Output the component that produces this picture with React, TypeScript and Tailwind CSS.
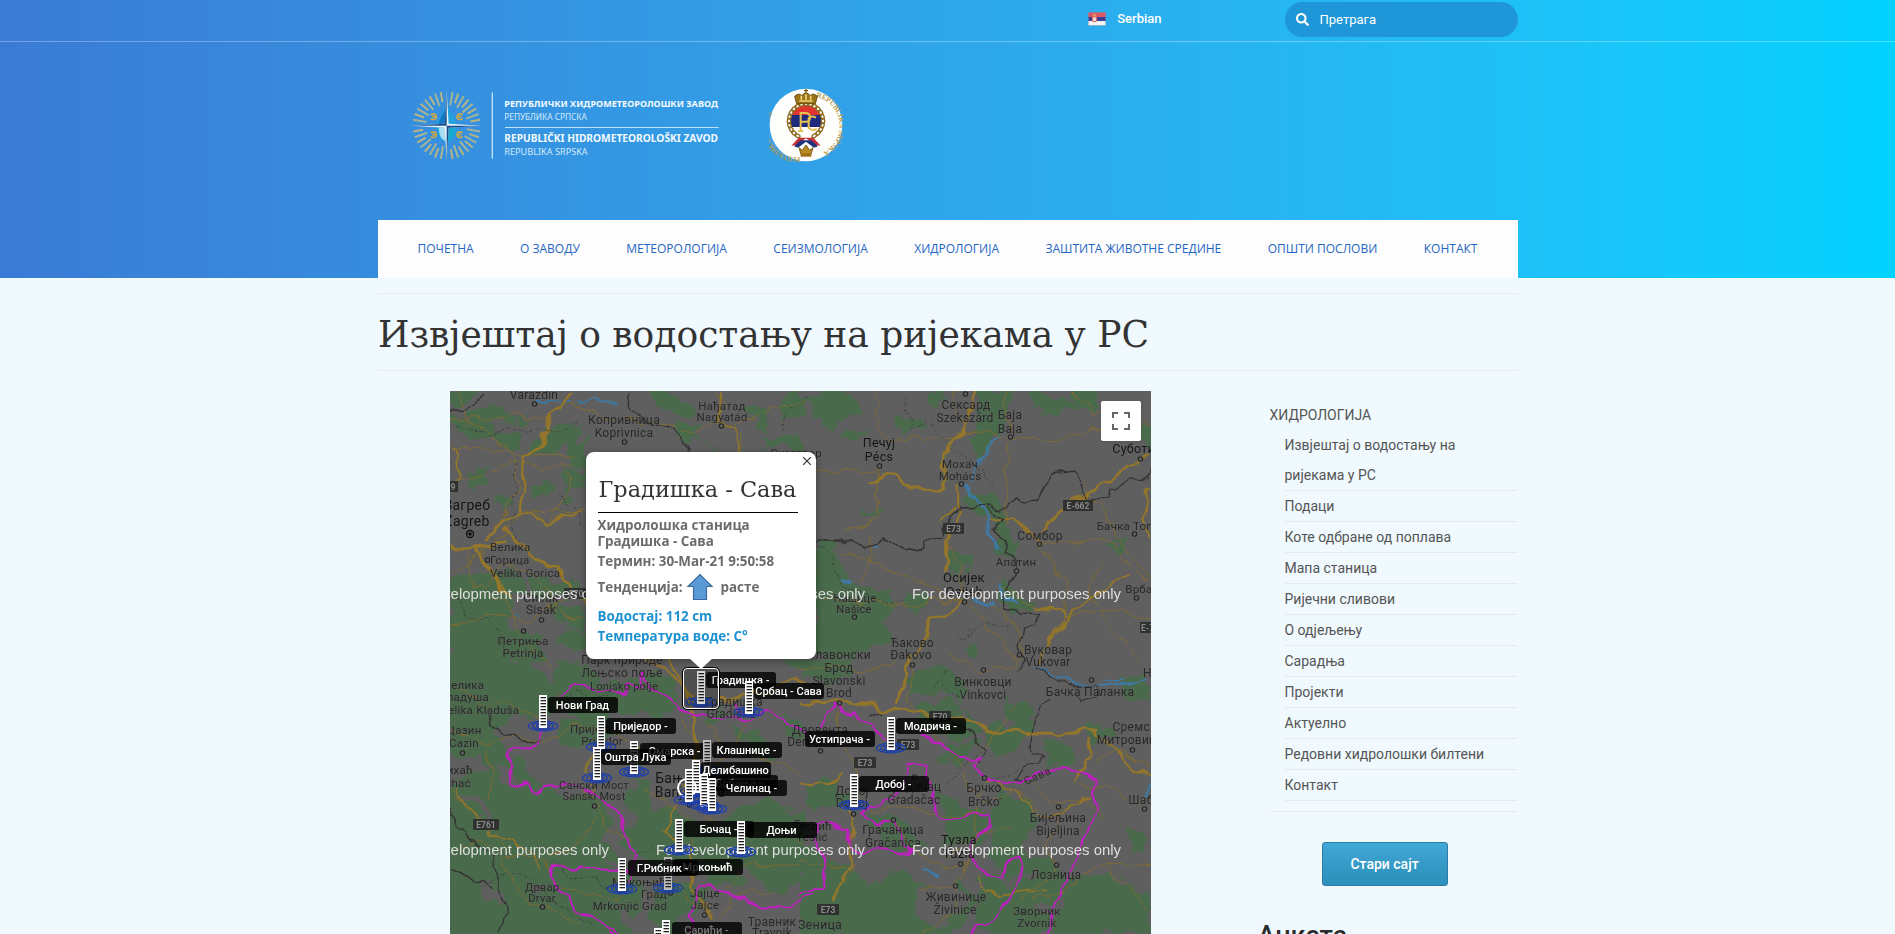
import React from "react";
import { FaSearch } from "react-icons/fa";

const MAP_X = 450;
const MAP_Y = 391;

const navItems = [
  "ПОЧЕТНА",
  "О ЗАВОДУ",
  "МЕТЕОРОЛОГИЈА",
  "СЕИЗМОЛОГИЈА",
  "ХИДРОЛОГИЈА",
  "ЗАШТИТА ЖИВОТНЕ СРЕДИНЕ",
  "ОПШТИ ПОСЛОВИ",
  "КОНТАКТ",
];

const sideItems = [
  "Извјештај о водостању на ријекама у РС",
  "Подаци",
  "Коте одбране од поплава",
  "Мапа станица",
  "Ријечни сливови",
  "О одјељењу",
  "Сарадња",
  "Пројекти",
  "Актуелно",
  "Редовни хидролошки билтени",
  "Контакт",
];

function Flag() {
  return (
    <svg width="20" height="16" viewBox="0 0 20 16" className="block">
      <rect x="1" y="1" width="18" height="14" rx="1.5" fill="#8a8fa0" opacity=".6" />
      <rect x="1.5" y="1.5" width="17" height="4.6" fill="#d95a64" />
      <rect x="1.5" y="6" width="17" height="4.2" fill="#3c3f96" />
      <rect x="1.5" y="10" width="17" height="4.3" fill="#f4f2f2" />
      <path d="M5 4.5h5v5.5q-2.500 2.500-5 0z" fill="#dd6a5e" />
      <path d="M5.700 4.500q1.800-3 3.600 0z" fill="#e8c27a" />
      <path d="M6 7q1.500-2 3 0v3h-3z" fill="#f0d9d0" />
    </svg>
  );
}

function InstituteLogo() {
  const rays = [];
  for (let q = 0; q < 4; q++) {
    for (let i = 0; i < 8; i++) {
      rays.push(q * 90 + 10 + i * 10);
    }
  }
  return (
    <svg width="310" height="74" viewBox="410 88 310 74" className="block">
      <g transform="translate(370 60) scale(.33333)">
        {rays.map((a, i) => (
          <line
            key={a}
            x1="0"
            y1={i % 2 ? -72 : -62}
            x2="0"
            y2="-102"
            stroke={i % 2 ? "#b9b482" : "#a3b596"}
            strokeWidth="6"
            transform={`translate(227 197) rotate(${a})`}
          />
        ))}
        <path d="M227 130C212 165 198 178 198 208a29 38 0 0 0 58 0C256 178 242 165 227 130z" fill="#1fa3dd" />
        <path d="M227 136C214 168 203 180 203 197H227z" fill="#1278c4" />
        <path d="M203 203h20v40q-18-6-20-40z" fill="#a9dcf3" />
        <path d="M231 203h20q0 32-20 40z" fill="#18a7cf" />
        {[
          [187, 170],
          [267, 170],
          [187, 224],
          [267, 224],
        ].map(([x, y], i) => (
          <g key={i} transform={`translate(${x} ${y}) scale(${i % 2 ? -1 : 1} 1)`} fill="none" stroke="#c9a84a" strokeWidth="5">
            <path d="M-8-6q10-5 15 0q4 6 0 12q-5 5-15 0M-4 0h10" />
          </g>
        ))}
        <path d="M227 92l6 99 100 6-100 6-6 99-6-99-100-6 100-6z" fill="#e9f5fb" />
        <path d="M227 92v105l-6-6zM333 197H227l6 6zM227 302V197l6 6zM121 197h106l-6-6z" fill="#1a4f8c" />
        <rect x="362" y="97" width="4" height="199" fill="#bfe0f6" />
        <rect x="402" y="201" width="641" height="3" fill="#bfe0f6" />
        <g fill="#f2faff" fontFamily="'Noto Sans','Open Sans',sans-serif">
          <text x="400" y="141" fontSize="27" fontWeight="700" textLength="641" lengthAdjust="spacingAndGlyphs">РЕПУБЛИЧКИ ХИДРОМЕТЕОРОЛОШКИ ЗАВОД</text>
          <text x="400" y="179" fontSize="27" fill="#d2eafa" textLength="247" lengthAdjust="spacingAndGlyphs">РЕПУБЛИКА СРПСКА</text>
          <text x="400" y="247" fontSize="29" fontWeight="700" textLength="641" lengthAdjust="spacingAndGlyphs">REPUBLIČKI HIDROMETEOROLOŠKI ZAVOD</text>
          <text x="400" y="285" fontSize="28" fill="#d2eafa" textLength="250" lengthAdjust="spacingAndGlyphs">REPUBLIKA SRPSKA</text>
        </g>
      </g>
    </svg>
  );
}

function Emblem() {
  const leaves = [];
  for (let a = -150; a <= 150; a += 15) leaves.push(a);
  return (
    <svg width="74" height="74" viewBox="-111 -111 222 222" className="block">
      <defs>
        <path id="arcL" d="M-18 96A84 84 0 0 1 -38 -75" />
        <path id="arcR" d="M30 -84A88 88 0 0 1 20 90" />
      </defs>
      <circle r="109" fill="#fefefc" />
      <g fill="#b89a4c" fontFamily="'Liberation Serif',serif" fontSize="23" fontWeight="700">
        <text>
          <textPath href="#arcL" textLength="192" lengthAdjust="spacingAndGlyphs">РЕПУБЛИКА СРПСКА</textPath>
        </text>
        <text>
          <textPath href="#arcR" textLength="218" lengthAdjust="spacingAndGlyphs">REPUBLIKA SRPSKA</textPath>
        </text>
      </g>
      <clipPath id="shield">
        <circle cy="-12" r="47" />
      </clipPath>
      <g clipPath="url(#shield)">
        <rect x="-50" y="-62" width="100" height="36" fill="#e0352f" />
        <rect x="-50" y="-30" width="100" height="36" fill="#1f2c7d" />
        <rect x="-50" y="6" width="100" height="34" fill="#fff" />
      </g>
      {leaves.map((a) => (
        <ellipse key={a} cx="0" cy="-51" rx="8" ry="5" fill="none" stroke="#8d6a1f" strokeWidth="4" transform={`translate(0 -12) rotate(${a})`} />
      ))}
      <g fill="none" stroke="#e7c252" strokeWidth="6">
        <path d="M-16 18V-36H2q12 4 10 16t-14 10h-14M-24 18h16" />
        <path d="M30-22q-14-8-22 2v28q8 12 24 4" />
      </g>
      <path d="M-28-64h56l6-22q-12-12-22-2q-4-8-12-8t-12 8q-10-10-22 2z" fill="#9b7418" stroke="#6b4d0e" strokeWidth="3" />
      <path d="M-20-72h40M-14-88v12M0-92v16M14-88v12" stroke="#f0d67c" strokeWidth="5" />
      <path d="M0-109v14M-6-103h12" stroke="#7a5a12" strokeWidth="4" />
      <path d="M-22 38L-44 62l14-2 30-20 30 20 14 2-22-24z" fill="#c62e35" />
      <path d="M-16 46l-20 18 12 4L0 50l24 18 12-4-20-18z" fill="#23307c" />
      <path d="M-15 88l-6-20 10 8L0 60l11 16 10-8-6 20z" fill="#b98b22" stroke="#80601a" strokeWidth="3" />
      <rect x="-16" y="86" width="32" height="9" fill="#a06f14" />
    </svg>
  );
}

type Lbl = [number, number, string, number?, number?];

/* x-centre, baseline, text, size, emphasis */
const places: Lbl[] = [
  [534, 399, "Varaždin", 12],
  [624, 424, "Копривница", 12],
  [624, 437, "Koprivnica", 12],
  [722, 410, "Нађатад", 11.5],
  [722, 421, "Nagyatád", 11.5],
  [796, 457, "Сигетвар", 11.5],
  [966, 409, "Сексард", 12],
  [965, 422, "Szekszárd", 12],
  [1010, 419, "Баја", 12],
  [1010, 433, "Baja", 12],
  [879, 447, "Печуј", 12.5, 1],
  [879, 461, "Pécs", 12.5, 1],
  [960, 468, "Мохач", 11.5],
  [960, 480, "Mohács", 11.5],
  [1141, 453, "Суботица", 12.5, 1],
  [467, 510, "Загреб", 14, 1],
  [467, 526, "Zagreb", 14, 1],
  [1135, 530, "Бачка Топола", 11.5],
  [1040, 540, "Сомбор", 12],
  [1016, 566, "Апатин", 11.5],
  [964, 582, "Осијек", 13, 1],
  [964, 596, "Osijek", 13, 1],
  [1142, 593, "Врбас", 11.5],
  [855, 602, "Нашице", 11],
  [854, 613, "Našice", 11],
  [541, 602, "Сисак", 12],
  [541, 614, "Sisak", 12],
  [523, 645, "Петриња", 11.5],
  [523, 657, "Petrinja", 11.5],
  [912, 647, "Ђаково", 12],
  [911, 659, "Đakovo", 12],
  [839, 659, "Славонски", 12],
  [839, 672, "Брод", 12],
  [839, 685, "Slavonski", 12],
  [839, 697, "Brod", 12],
  [1048, 654, "Вуковар", 12],
  [1048, 666, "Vukovar", 12],
  [622, 664, "Парк природе", 12],
  [622, 677, "Лоњско поље", 12],
  [624, 690, "Lonjsko polje", 11],
  [983, 686, "Винковци", 12],
  [983, 699, "Vinkovci", 12],
  [1090, 696, "Бачка Паланка", 12],
  [1158, 677, "Нови", 12],
  [464, 689, "Велика", 11.5],
  [464, 701, "Кладуша", 11.5],
  [480, 714, "Velika Kladuša", 11.5],
  [464, 734, "Цазин", 11.5],
  [464, 747, "Cazin", 11.5],
  [456, 774, "Бихаћ", 11.5],
  [456, 787, "Bihać", 11.5],
  [596, 733, "Приједор", 11.5],
  [602, 745, "Prijedor", 11.5],
  [734, 706, "Градишка", 12],
  [731, 718, "Gradiška", 12],
  [594, 789, "Сански Мост", 11],
  [594, 800, "Sanski Most", 11],
  [692, 783, "Бања Лука", 14, 1],
  [690, 797, "Banja Luka", 14, 1],
  [820, 734, "Дервента", 12],
  [812, 746, "Derventa", 12],
  [852, 795, "Добој", 12],
  [852, 807, "Doboj", 12],
  [914, 791, "Градачац", 12],
  [914, 804, "Gradačac", 12],
  [984, 792, "Брчко", 12],
  [984, 806, "Brčko", 12],
  [1138, 731, "Сремска", 12],
  [1130, 744, "Митровица", 12],
  [1148, 804, "Шабац", 12],
  [1058, 822, "Бијељина", 12],
  [1058, 835, "Bijeljina", 12],
  [893, 834, "Грачаница", 12],
  [893, 847, "Gračanica", 12],
  [959, 844, "Тузла", 13, 1],
  [959, 858, "Tuzla", 13, 1],
  [1056, 879, "Лозница", 12],
  [956, 901, "Живинице", 12],
  [955, 914, "Živinice", 12],
  [1037, 915, "Зворник", 11.5],
  [1037, 927, "Zvornik", 11.5],
  [542, 891, "Дрвар", 11],
  [542, 902, "Drvar", 11],
  [639, 886, "Мркоњић", 11.5],
  [654, 898, "Град", 11.5],
  [630, 910, "Mrkonjić Grad", 11.5],
  [705, 897, "Јајце", 11.5],
  [705, 909, "Jajce", 11.5],
  [772, 926, "Травник", 12],
  [772, 937, "Travnik", 12],
  [820, 929, "Зеница", 12.5],
  [812, 830, "Теслић", 11.5],
  [812, 841, "Teslić", 11.5],
  [800, 828, "Te", 11],
];

const startPlaces: Lbl[] = [
  [490, 551, "Велика", 11.5],
  [490, 564, "Горица", 11.5],
  [490, 577, "Velika Gorica", 11.5],
];

const dots = [
  [534, 404], [624, 442], [721, 426], [965, 394], [1010, 437], [879, 466], [961, 484], [1140, 459],
  [487, 560], [541, 620], [523, 631], [1134, 534], [1039, 544], [1016, 571], [964, 602], [1136, 598],
  [854, 617], [912, 665], [839, 703], [1019, 655], [983, 670], [1091, 680], [462, 753], [594, 806],
  [853, 814], [893, 820], [984, 778], [1132, 750], [1058, 807], [1144, 809], [960, 864], [1056, 865],
  [955, 886], [542, 907], [704, 915], [820, 751], [670, 893], [914, 777], [689, 805],
];

const shields: [number, number, number, string][] = [
  [443, 481, 15, "59"],
  [564, 588, 24, "E70"],
  [1063, 500, 30, "E-662"],
  [943, 523, 21, "E73"],
  [1140, 622, 20, "E-70"],
  [929, 711, 22, "E70"],
  [897, 739, 22, "E73"],
  [854, 757, 22, "E73"],
  [473, 819, 26, "E761"],
  [817, 904, 22, "E73"],
];

function MapTerrain() {
  return (
    <svg width="701" height="543" viewBox="450 391 701 543" className="block">
      <defs>
        <filter id="rough" x="-5%" y="-5%" width="110%" height="110%">
          <feTurbulence type="fractalNoise" baseFrequency=".018" numOctaves="4" seed="4" result="n" />
          <feDisplacementMap in="SourceGraphic" in2="n" scale="70" xChannelSelector="R" yChannelSelector="G" />
        </filter>
        <filter id="wiggle" x="-5%" y="-5%" width="110%" height="110%">
          <feTurbulence type="fractalNoise" baseFrequency=".05" numOctaves="2" seed="9" result="n" />
          <feDisplacementMap in="SourceGraphic" in2="n" scale="16" xChannelSelector="R" yChannelSelector="G" />
        </filter>
        <clipPath id="upper"><rect x="450" y="391" width="701" height="271" /></clipPath>
        <clipPath id="lower"><rect x="450" y="660" width="701" height="274" /></clipPath>
      </defs>
      <rect x="450" y="391" width="701" height="543" fill="#5f5f5f" />

      <g clipPath="url(#upper)">
        <g transform="translate(445 385) scale(.33333)">
          <g fill="#496a4b" filter="url(#rough)">
            <path d="M15 18h90l-20 20-40 25-30 10zM70 70l60-10 60 15-20 20-60 25-40-15zM15 100l60 10 80 20 60 20 30 40-40 20-60-50-130-20z" />
            <path d="M280 140l80-30 60 20-40 20 40 50-60-10-50 20-40-10zM130 60l60 20 50 20-30 20-60-20zM600 18h60l90 50-60 30-50-30zM690 110l80 20-30 30 60 20-90-10z" />
            <path d="M60 260l60 10 20 40-50 10zM150 320l40 20-10 40-40-30zM260 290l40-10 20 50-50 10zM370 270l40-20v60l-60 40zM380 180l50-20v80l-50 10zM100 240l50 0-20 30-50-10z" />
            <path d="M15 600l40-30 90-10 90 10 10 50-50 30-10 60 60 60 30 70H15zM250 560l80 40 80-20 20 60-80-10-80 20zM300 680l60-30 60 30v60l-60-20z" />
            <path d="M1000 40l80-20v60l-60 40zM880 60l70 10 20 60-40-20zM950 150l130 10v30H960zM200 740l60-10 50 110H190zM330 740l90 0 30 60-110-20z" />
          </g>
        </g>
        <g transform="translate(800 385) scale(.33333)">
          <g fill="#496a4b" filter="url(#rough)">
            <path d="M20 30l100-10 60 20 30 60-60-10-50 30-60-20zM290 100l50-10 40 30-50 30-40-20zM380 18l60 10-20 60-40-30zM160 120l40 20-40 30-40-30z" />
            <path d="M540 18h90v60l-20 60-60 60-20 30-20-60 40-80zM680 18l90 10 60 30-60 30-60-20zM820 20h80l-10 60-60-10z" />
            <path d="M500 330l70 0 40 40 30 80-20 60-40-60-30-60-50-40zM590 470l60 10 0 40-50-10zM600 590l40 20 60 50-60 20-40-30z" />
            <path d="M930 470l50 0-10 40-30-10zM450 500l60 20 0 40-60-10zM180 380l60-10 30 20-60 10z" />
            <path d="M48 470l60 30 20 60 60 60 80-10 20 60-50 30 30 60-60 30-50 40-120-20zM330 620l50 10-20 50-40-10zM500 780l50 10 0 40-40-10zM60 560l60 0 30 50-90 0zM1000 130l60 0 0 50-40-10z" />
          </g>
        </g>
      </g>

      <g clipPath="url(#lower)">
        <g transform="translate(445 650) scale(.33333)">
          <g fill="#496a4b" filter="url(#rough)">
            <path d="M0 30l200-10 110 60 60 30-60 80-90 0-60 60 30 80-60 10-130-40zM330 20l90 20 60 60 170-30 60 80-60 50-110-20-90 40-100-40z" />
            <path d="M0 400l110-40 110-50 50 80 80 50 90-20 60 60-20 80 60 90 60 80-40 60-100-40-60 20-90-40-100 20-60 60-150-30z" />
            <path d="M0 700l100-30 60-40 90 50 60 50 110 0 120 60 40 110H0zM520 560l90-60 80-20 70 60 100-10 100-80 60 60-60 80-120 10-80 60-100-10-100-40z" />
            <path d="M780 560l60-60 110-50 120 40v200l-90 50-100-30-90 0zM640 700l90-20 60 30-30 70-90 60-60-40zM560 380l60 20-10 70 70 20-60 30-80-60zM350 220l90-20 80 30-60 50-100 20zM700 560l60 10 20 100-80-10z" />
            <path d="M1000 10l100 20-40 30zM1020 200l60 10v60l-60-10zM760 190l70-20 30 20-80 30zM860 240l90 20 60 60-90-10z" />
          </g>
          <g fill="#5f5f5f" filter="url(#rough)">
            <path d="M30 430l80 20 50 60-50-10zM480 620l100 20-50 30zM250 690l80 30-60 10zM860 640l90 50 60 60-90-10z" />
            <path d="M150 350l50 10 20 60-50-10zM90 700l50 0 50 60-70-10z" />
          </g>
        </g>
        <g transform="translate(800 650) scale(.33333)">
          <g fill="#496a4b" filter="url(#rough)">
            <path d="M10 10l110 0 40 60-60 30-100-20zM330 70l90-30 80 60-30 50-90-20-60 20zM350 170l80-20 60 40 60 60-80 20-100-40z" />
            <path d="M450 280l80 0-40 60-80-10zM560 250l60-30 90-10-60 80-80 30zM610 140l70 20 20 60-60 10zM740 260l60 20 30 50-90 20zM850 230l60-10 30 50-60 10zM950 90l100 10v60l-60-20z" />
            <path d="M20 390l90 0 60 40-40 60-110 0zM200 500l60-20 60 50 60 60-110 10zM0 590l90 30 100 60 120-20 80 60 90-20 60 60-90 90-100 10H0zM400 400l90 70 110 20-60 90-100-10z" />
            <path d="M590 420l90 30 40 80-60 60 60 60-100 30-60-60zM540 680l100 20 90-40 100 20 90-10 130 60v120H540zM680 620l60 10 60 50-80 20zM980 540l70 10v60l-60 0z" />
          </g>
          <g fill="#5f5f5f" filter="url(#rough)">
            <path d="M350 720l110-20 50 60-90 80-60-20zM180 640l60 10-40 60zM700 760l90 0-30 60z" />
          </g>
        </g>
      </g>

      <g fill="none" filter="url(#wiggle)" strokeLinejoin="round">
        <g transform="translate(445 385) scale(.33333)">
          <g stroke="#3f78a4" strokeWidth="6">
            <path d="M270 45l60 10 60-5M400 50l70-5 50 20M200 685l15 8" />
          </g>
          <g stroke="#806b32" strokeWidth="3">
            <path d="M15 110l90-10 100-10 90 10 90-40 110 40 110 10 100 20M15 200l90-15 140 20 150 0M15 290l120-20 60-40 90 20 110-10M240 370l80 45 60-130-20-50M40 18l30 90 130 90 20 110-50 90M15 560l110-60 110-120 190 0" />
            <path d="M60 490l30 110 90 50 40 90 90 100M15 720l150-30 90 20 130-90M850 60l-50-40M720 140l80-20 90-5 90-40 100-20M890 140l-10 60M300 600l60 90 60 10M120 600l50-60 100 30 60 120" />
          </g>
          <g stroke="#93762b" strokeWidth="10">
            <path d="M380 18l-30 60-50 15 5 50-30 50-35 15-5 90-10 80-70 45-20 40M15 490l100 5 60-25M90 495l90 120 20 30M175 430l90 90 70 30 40 60 60 50" />
            <path d="M15 190q40 60 20 120M215 375l100 40 100-50" strokeWidth="6" />
            <path d="M830 18l-10 90 55 20 0 90" strokeWidth="6" />
          </g>
          <path d="M15 78l70-20 40-40M553 18l15 70 60 30 70 20 30 50 10 40" stroke="#323232" strokeWidth="4" />
          <g stroke="#3a3a3a" strokeWidth="2.500" strokeDasharray="6 6">
            <path d="M15 120l110 30 110-15 60 10 110-30M210 240l-10 190 30 60M1010 140l20 -60 60-40M40 640l20 60 80 10 50 90M335 320l60 60 30 60" />
          </g>
        </g>
        <g transform="translate(800 385) scale(.33333)">
          <g stroke="#3f78a4">
            <path d="M595 150l-35 60-30 20-20 60" strokeWidth="5" />
            <path d="M485 295l40 45 50 60-5 60 30 40M600 590l10 50 40 20" strokeWidth="8" />
            <path d="M215 480l20 5M125 585l25 5M530 655l45-2" strokeWidth="12" />
          </g>
          <g stroke="#806b32" strokeWidth="3">
            <path d="M48 268l130-15 60 0 0 60-10 90-90 40M240 18l-20 60 40 90 110-10 130-10 160 10 120 10 90-40 60-10M500 140l-50-120M620 18l10 130-10 60 0 210M440 480l40 60 0 90-90 20-110 10-60-20M200 450l10 90-30 60" />
            <path d="M720 480l50 70 30 60-10 90-50 80M820 18l60 80 90-20 80 40M860 280l60 130 80 120 50 50M720 480l190-20 90 100 50 30M600 600l90 60 110 30 130-20 120 40M910 530l-40 100 60 90 90 120M550 650l90 60 30 90-20 40M20 620l90 30 180 0M130 500l170 60 190 90 100 90 60 90" />
          </g>
          <g stroke="#93762b" strokeWidth="9">
            <path d="M518 18l-5 90-80 100 0 70-5 35-90-5-50-35-70 15M475 310l-5 100-30 60 0 90" />
            <path d="M1050 200l-50 40-90 60-100 60-90 80M1040 300l-10 100 20 70M490 650l-90 50-50 110M420 410l40-40M580 410l60-10 90 80" strokeWidth="8" />
            <path d="M700 665l100 25 90-60 80-60M805 690l-90 110 10 40" strokeWidth="6" />
          </g>
          <path d="M48 465l80 0 60 20 60-20 60 30 50 10 10-30 60-20 20-60 30-30 70 0 60 10 40-30 60 5 40-60 10-20 60-10 30 30 20 50 60-5 10-30 90-20 40-50 60-50 90 10M570 375l40 30-30 40 40 20-10 40 40 20-5 40-20 20-10 50 -10 40 60 10 50 0-10 40-40 5-10 70 30 30-20 30" stroke="#333" strokeWidth="4.500" />
          <path d="M40 470l60 40 20 90 80 40 110 10M400 120l70 70 80 60 20 60M320 40l10 90 60-20M480 760l90-50 60 10" stroke="#3a3a3a" strokeWidth="2.500" strokeDasharray="6 6" />
        </g>
        <g transform="translate(445 650) scale(.33333)">
          <g stroke="#806b32" strokeWidth="3">
            <path d="M15 250l90 30 110-20 90 20 90-60 110 30 90 50M15 430l110 90 60 90 110 20 40 80 90 20 100 10M20 600l90-30 70 60 40 100 90 40 90 60M400 420l60 40 30 90 80 20M450 500l-60 90-90 40M600 430l90 30 60 80 0 90-70 80-60 20M500 760l90-60 90 0 90 70M780 500l90 60 100-20 100 40M790 220l60 90 130 20 90 50M900 220l-40 90-90 60M840 700l90-60 140 10M800 850l60-110 120-20" />
            <path d="M20 110l110 60 70-10 110 60M120 300l20 160M700 190l60 90-20 110" />
          </g>
          <g stroke="#93762b" strokeWidth="8">
            <path d="M600 18l90 70 80 60 90 0 90-20 130-40M740 150l10 120-10 110-40 70M665 18l80 130" />
            <path d="M30 430l100 110 130 70 30 60M700 450l-40 90 90 70-10 100 60 90M450 440l-30-90 60-60" strokeWidth="5" />
          </g>
          <path d="M130 195l50 50 50 25 60 5M15 480l60 90 50 40 30 70 30 110-20 60M15 655l40 15 90 50" stroke="#333" strokeWidth="4" />
          <path d="M350 140l60-10 90 20M320 640l60 40 130 20M560 600l60-10M110 710l60-40 80 10 90 80 110 80M780 440l110-20 100 30" stroke="#333" strokeWidth="2.500" strokeDasharray="5 6" />
        </g>
        <g transform="translate(800 650) scale(.33333)">
          <g stroke="#3f78a4">
            <path d="M710 55l60 25 60 20 90 5 130-10M910 90l60 0" strokeWidth="6" />
            <path d="M370 670l50 10M1040 400l-5 50" strokeWidth="9" />
          </g>
          <g stroke="#806b32" strokeWidth="3">
            <path d="M0 60l90-10 90 20 100-40M340 40l-10 110 60 90 80 90 60 110M120 160l-10 90 60 90 0 100 60 50 120-20 110 30 90-20M560 390l-40 90 10 110-60 110-100 20M280 510l60 90 90 50 60 0M690 400l60 60 110-10 60 60M470 690l-10 100-90 60M550 450l110-20 60 50M780 470l-30 110 10 90-90 80M700 740l90-10 60-60 90-30 110 10M880 330l90-20 80 40M840 400l90 20 110 50M650 160l-60 90-60 60M640 520l-110 30-90 70" />
            <path d="M0 630l90 30 70-20M160 640l-60 110M450 18l90 50 120-20M900 600l50 90 100 80" />
          </g>
          <g stroke="#93762b" strokeWidth="9">
            <path d="M0 162l120-12 160 30 120 20 90 5 80 40 170 5 150 0M335 18l-50 150" />
            <path d="M870 245l90 70 90 60M820 400l60-130M0 400l60 5 80-30M155 440l5 100-10 100-50 110" strokeWidth="7" />
            <path d="M560 390l90 40 70 70 60-10 100-60M740 720l-140 20-70-60" strokeWidth="5" />
          </g>
          <path d="M710 58l50 25 50 25 80-5 5 30-50 20 -20-20M760 150l-50 30-10 60 0 60 40 20-30 20-40 10-20 40 40 10M210 200l30-20 20 10M410 190l90 50 50 60-10 40" stroke="#353535" strokeWidth="4" />
          <path d="M390 120l50-60-10 60 60 30M430 410l110-110M600 450l-20-60 70-30" stroke="#353535" strokeWidth="2.500" strokeDasharray="6 6" />
        </g>
      </g>

      <g filter="url(#wiggle)" fill="none" stroke="#c31fc4" strokeLinejoin="round" strokeLinecap="round" strokeWidth="6">
        <g transform="translate(445 650) scale(.33333)">
          <path d="M350 138l18-24 60-8 40 16 60 14 15-30 40 10 5-40 20 30 35 15 50 50 25 8 25 15 110 15 60-5M293 240l-15 40-45 10-45 22 8 50 22 38 25 5 30 30 30-34 60 5 60 20 75 30 28 30 12 60 28 65 0 30-20 50M540 662l-60 0-90-10-60 5-12 15 10 30 60 75 60 30 60 25 40 35" />
          <path d="M875 160l5 25 60 5 40-8 40 30 30 10 30 30M520 860l-20-20M725 852l15-30-15-30 25-30 15-60 40 8 50 10 45 40 60 15 70 0 45-30 25-20" />
        </g>
        <g transform="translate(800 650) scale(.33333)">
          <path d="M0 235l10 10M70 240l10-30 25-45 20 25 30-5 30 30 25 15 30 25 40 5M360 240l60 40 60 40 65 5-20 18 15 30 40 25 90 0 60-25 50-25 80 15 30 30-5 90-40 90-30 90-50 100-5 90-20 50 30 50 60 10 40 20M325 365l-2-15 50 0 10 30 10 30 10 40 10 50 50 8 60-20 40 10 0 30-50 45-5 20 5 45 70 40 30 5 20-60 30 0 5 40-20 50-60 85-60 40-20 50-5 20" />
          <path d="M330 590l-30 20-80-10-40 0-20-10-20-60-60-15-30 10-10 50 35 40 5 40-10 45-70 25M320 375l-40 80-60 10-30 30 30 20 60 10 40 60" />
        </g>
      </g>

      <g fontFamily="Roboto,'Noto Sans',sans-serif">
        {shields.map(([x, y, w, t], i) => (
          <g key={i}>
            <rect x={x} y={y} width={w} height="11" fill="#2f322f" />
            <text x={x + w / 2} y={y + 8.800} fontSize="8.500" fontWeight="700" fill="#8b8b8b" textAnchor="middle">{t}</text>
          </g>
        ))}
        {dots.map(([x, y], i) => (
          <circle key={i} cx={x + 0.500} cy={y} r="2.200" fill="#5f5f5f" stroke="#242424" strokeWidth="1.100" />
        ))}
        <circle cx="470" cy="534" r="3.500" fill="none" stroke="#111" strokeWidth="1.300" />
        <circle cx="470" cy="534" r="1.800" fill="#111" />
        {places.concat(startPlaces).map(([x, y, t, s, b], i) => (
          <text
            key={i}
            x={x}
            y={y}
            fontSize={s}
            fill={b ? "#151515" : "#282828"}
            stroke="#666"
            strokeOpacity=".35"
            strokeWidth="1.500"
            paintOrder="stroke"
            letterSpacing=".25"
            textAnchor={i >= places.length ? "start" : "middle"}
          >
            {t}
          </text>
        ))}
        <text x="0" y="0" fontSize="11" fill="#303030" letterSpacing=".8" transform="translate(1026 785) rotate(-24)">Сава</text>
      </g>
      <g fontFamily="'Liberation Sans',Arial,sans-serif" fontSize="15.500" fill="#dedede">
        {[400, 656, 912].map((x) =>
          [599, 855].map((y) => (
            <text key={`${x}-${y}`} x={x} y={y} textLength="209" lengthAdjust="spacingAndGlyphs">For development purposes only</text>
          ))
        )}
      </g>
    </svg>
  );
}

function Gauge({ x, y, faded }: { x: number; y: number; faded?: boolean }) {
  return (
    <svg width="32" height="38" viewBox="0 0 32 38" className="absolute" style={{ left: x - 12 - MAP_X, top: y - MAP_Y }}>
      <g fill="none" stroke="#1d3fae" strokeWidth="1.300">
        <ellipse cx="16" cy="31" rx="14.500" ry="4.800" />
        <ellipse cx="16" cy="31" rx="10.500" ry="3.400" />
        <ellipse cx="16" cy="31" rx="6.500" ry="2" />
      </g>
      <rect x="12" y="0" width="8" height="33" fill={faded ? "#bcbcbc" : "#fff"} />
      {[2, 5, 8, 11, 14, 17, 20, 23, 26, 29].map((v) => (
        <rect key={v} x="13.500" y={v} width="5.500" height="1.300" fill="#222" />
      ))}
    </svg>
  );
}

type Tag = { x: number; y: number; text: string; dim?: boolean; w?: number };

function StationTag({ x, y, text, dim, w = 70 }: Tag) {
  return (
    <span
      className={
        "absolute flex h-4 items-center justify-center overflow-visible rounded-[3px] bg-black/80 text-[11px] font-medium leading-none whitespace-nowrap " +
        (dim ? "text-[#777]" : "text-white")
      }
      style={{ left: x - MAP_X, top: y - MAP_Y, width: w }}
    >
      {text}
    </span>
  );
}

function Stations() {
  return (
    <div className="absolute inset-0 overflow-hidden font-['Roboto','Noto_Sans',sans-serif]">
      <Gauge x={697} y={671} />
      <StationTag x={706} y={672} text="Градишка -" />
      <Gauge x={745} y={681} />
      <StationTag x={754} y={683} text="Србац - Сава" />
      <Gauge x={539} y={695} />
      <StationTag x={548} y={697} text="Нови Град" />
      <Gauge x={597} y={716} />
      <StationTag x={606} y={718} text="Приједор -" />
      <Gauge x={630} y={741} />
      <StationTag x={640} y={743} text="Омарска -" />
      <Gauge x={703} y={740} faded />
      <StationTag x={712} y={742} text="Клашнице -" />
      <Gauge x={593} y={747} />
      <StationTag x={601} y={749} text="Оштра Лука" />
      <Gauge x={692} y={760} />
      <StationTag x={701} y={775} text="Врбања -" dim w={77} />
      <StationTag x={701} y={762} text="Делибашино" />
      <span
        className="absolute size-5 rounded-full border-2 border-white"
        style={{ left: 677 - MAP_X, top: 778 - MAP_Y }}
      />
      <Gauge x={685} y={769} />
      <Gauge x={700} y={774} />
      <Gauge x={708} y={778} />
      <StationTag x={717} y={780} text="Челинац -" />
      <StationTag x={805} y={731} text="Устипрача -" />
      <Gauge x={887} y={717} />
      <StationTag x={896} y={718} text="Модрича -" />
      <Gauge x={850} y={774} />
      <StationTag x={859} y={776} text="Добој -" />
      <StationTag x={747} y={822} text="Доњи" />
      <Gauge x={675} y={819} />
      <StationTag x={684} y={821} text="Бочац -" />
      <Gauge x={737} y={821} />
      <StationTag x={673} y={859} text="Мркоњић" />
      <Gauge x={664} y={857} faded />
      <Gauge x={618} y={858} />
      <StationTag x={628} y={860} text="Г.Рибник -" />
      <Gauge x={662} y={920} />
      <Gauge x={654} y={928} />
      <StationTag x={672} y={922} text="Сарићи -" dim />
      <span
        className="absolute h-[41px] w-9 rounded-[4px] border border-white bg-black/15 outline outline-black"
        style={{ left: 683 - MAP_X, top: 668 - MAP_Y }}
      />
    </div>
  );
}

function InfoWindow() {
  return (
    <div className="absolute top-[61px] left-[136px] h-[207px] w-[230px] rounded-lg bg-white pt-5 pl-3 shadow-[0_2px_7px_1px_rgba(0,0,0,0.3)]">
      <span className="absolute top-[4px] right-[4px]">
        <svg width="10" height="10" viewBox="0 0 10 10" className="block" stroke="#333" strokeWidth="1.200">
          <path d="M1.200 1.200l7.600 7.600M8.800 1.200L1.200 8.800" />
        </svg>
      </span>
      <h2 className="h-[41px] w-[200px] border-b border-black pt-px text-[#333]">
        <svg width="200" height="38" className="block overflow-visible">
          <text x="0.500" y="24" fontSize="23" fill="#333" fontFamily="'DejaVu Serif Condensed','DejaVu Serif',serif" textLength="198" lengthAdjust="spacingAndGlyphs">Градишка - Сава</text>
        </svg>
      </h2>
      <div className="font-['Open_Sans','Noto_Sans',sans-serif] text-[13.400px] font-bold text-[#6b6b6b]">
        <p className="mt-[4px] w-[180px] leading-4">
          Хидролошка станица
          <br />
          Градишка - Сава
        </p>
        <p className="leading-6">Термин: 30-Mar-21 9:50:58</p>
        <p className="flex h-7 items-center">
          Тенденција:
          <svg width="28" height="28" viewBox="0 0 28 28" className="mx-[3px] block">
            <path d="M14 1.500l12 12h-5.500v13h-13v-13H2z" fill="#5b9bd5" stroke="#3a6a9e" strokeWidth="1.200" />
          </svg>
          <span className="ml-1">расте</span>
        </p>
        <p className="mt-[5px] leading-5 text-[#1d91d1]">Водостај: 112 cm</p>
        <p className="leading-5 text-[#1d91d1]">Температура воде: C°</p>
      </div>
      <svg width="24" height="12" viewBox="0 0 24 12" className="absolute top-[206px] left-[103px]">
        <path d="M0 0h24L12 11z" fill="#fff" />
      </svg>
    </div>
  );
}

export default function App() {
  return (
    <div className="h-[934px] w-full overflow-hidden bg-[#f0f9fe] font-['Roboto','Noto_Sans',sans-serif]">
      <header className="flex h-[278px] flex-col bg-linear-to-r from-[#3a7bd5] to-[#00d2ff]">
        <div className="h-[42px] border-b border-white/30">
          <div className="mx-auto flex w-[1140px] items-start justify-end">
            <div className="flex items-center gap-[10px] pt-[9px] pr-[123px] text-[13px] font-medium leading-5 text-white">
              <Flag />
              <span>Serbian</span>
            </div>
            <div className="mt-[2px] flex h-[35px] w-[233px] items-center gap-[11px] rounded-full bg-[#1e96d8] pl-[11px] text-[13px] text-white">
              <FaSearch className="size-[13px]" />
              <span>Претрага</span>
            </div>
          </div>
        </div>
        <div className="mx-auto flex w-[1140px] flex-1 items-start pt-[46px] pl-[33px]">
          <InstituteLogo />
          <div className="ml-[48px]">
            <Emblem />
          </div>
        </div>
        <nav className="mx-auto flex h-[58px] w-[1140px] items-center justify-between bg-[#fdfdfd] pr-[40px] pl-[40px] font-['Open_Sans','Noto_Sans',sans-serif] text-[12px] whitespace-nowrap text-[#1f66c4]">
          {navItems.map((t) => (
            <a key={t}>{t}</a>
          ))}
        </nav>
      </header>

      <div className="mx-auto w-[1140px]">
        <div className="mt-[15px] h-[78px] border-y border-[#e3ebed]">
          <h1>
            <svg width="780" height="76" className="block overflow-visible">
              <text x="0" y="53" fontSize="38" fill="#333" fontFamily="'DejaVu Serif Condensed','DejaVu Serif',serif" textLength="771" lengthAdjust="spacingAndGlyphs">Извјештај о водостању на ријекама у РС</text>
            </svg>
          </h1>
        </div>

        <div className="flex pt-5">
          <main className="relative ml-[72px] h-[543px] w-[701px] shrink-0 overflow-hidden">
            <MapTerrain />
            <Stations />
            <InfoWindow />
            <button className="absolute top-[10px] right-[10px] flex size-10 items-center justify-center rounded-[2px] bg-white shadow">
              <svg width="18" height="18" viewBox="0 0 18 18" fill="#666">
                <path d="M0 0v6h2V2h4V0H0zm16 0h-4v2h4v4h2V0h-2zm0 16h-4v2h6v-6h-2v4zM2 12H0v6h6v-2H2v-4z" />
              </svg>
            </button>
          </main>

          <aside className="ml-[107px] w-[260px] pt-[9px] text-[14px] text-[#555]">
            <div className="ml-[12px] w-[247px] border-b border-[#e3ebed] pb-[10px]">
              <p className="leading-[30px]">ХИДРОЛОГИЈА</p>
              <ul className="pl-[15px]">
                {sideItems.map((t) => (
                  <li key={t} className="border-b border-[#e3ebed] pr-10 leading-[30px]">
                    <span className={t.length > 30 ? "" : "whitespace-nowrap"}>{t}</span>
                  </li>
                ))}
              </ul>
            </div>
            <button className="mt-[30px] ml-[64px] block h-11 w-[126px] rounded-[3px] border border-[#2a7ea6] bg-linear-to-b from-[#41a7d6] to-[#2c8fba] text-[14px] font-medium text-white">
              Стари сајт
            </button>
            <h3 className="mt-[30px] text-[27px] font-medium text-[#2b2b2b]">Анкета</h3>
          </aside>
        </div>
      </div>
    </div>
  );
}
